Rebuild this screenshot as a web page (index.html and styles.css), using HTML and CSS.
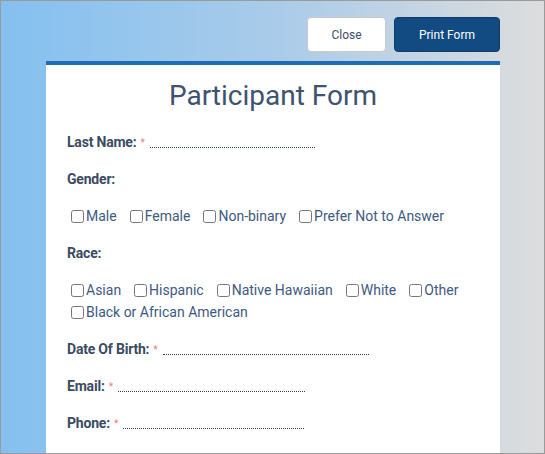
FILE: index.html
```html
<!DOCTYPE html>
<html>
<head>
<meta charset="utf-8">
<link rel="stylesheet" href="styles.css">
</head>
<body>
<div class="page">
  <div class="toolbar">
    <button class="btn btn-close">Close</button>
    <button class="btn btn-print">Print Form</button>
  </div>
  <div class="card">
    <h1 class="title">Participant Form</h1>
    <div class="field"><span class="label">Last Name:</span><span class="req">*</span><span class="line line-last"></span></div>
    <div class="field"><span class="label">Gender:</span></div>
    <div class="options">
      <label class="opt"><input type="checkbox">Male</label>
      <label class="opt"><input type="checkbox">Female</label>
      <label class="opt"><input type="checkbox">Non-binary</label>
      <label class="opt"><input type="checkbox">Prefer Not to Answer</label>
    </div>
    <div class="field"><span class="label">Race:</span></div>
    <div class="options">
      <label class="opt"><input type="checkbox">Asian</label>
      <label class="opt"><input type="checkbox">Hispanic</label>
      <label class="opt"><input type="checkbox">Native Hawaiian</label>
      <label class="opt"><input type="checkbox">White</label>
      <label class="opt"><input type="checkbox">Other</label>
      <label class="opt"><input type="checkbox">Black or African American</label>
    </div>
    <div class="field"><span class="label">Date Of Birth:</span><span class="req">*</span><span class="line line-dob"></span></div>
    <div class="field"><span class="label">Email:</span><span class="req">*</span><span class="line line-email"></span></div>
    <div class="field"><span class="label">Phone:</span><span class="req">*</span><span class="line line-phone"></span></div>
  </div>
</div>
</body>
</html>
```

FILE: styles.css
```css
html, body {
  margin: 0;
  padding: 0;
}
body {
  font-family: Roboto, "Liberation Sans", sans-serif;
}
.page {
  width: 545px;
  height: 454px;
  box-sizing: border-box;
  border: 1px solid #9a9a9a;
  overflow: hidden;
  background: linear-gradient(to right, #84c0f0 0%, #a9cbe9 50%, #dddddd 100%);
}
.toolbar {
  display: flex;
  justify-content: flex-end;
  gap: 8px;
  padding: 16px 44px 0 0;
}
.btn {
  height: 35px;
  box-sizing: border-box;
  border-radius: 4px;
  font-family: Roboto, "Liberation Sans", sans-serif;
  font-size: 12px;
  padding: 0;
}
.btn-close {
  width: 79px;
  background: #ffffff;
  border: 1px solid #c9c9c9;
  color: #3b4f6c;
}
.btn-print {
  width: 106px;
  background: #114b82;
  border: 1px solid #0d3c6a;
  color: #ffffff;
}
.card {
  margin: 9px 0 0 45px;
  width: 454px;
  height: 400px;
  background: #ffffff;
  border-top: 4px solid #1e6db4;
  box-sizing: border-box;
  padding: 14px 21px 0 21px;
}
.title {
  margin: 0 0 19px 0;
  text-align: center;
  font-weight: 400;
  font-size: 28px;
  line-height: 33px;
  color: #3d536f;
}
.field {
  height: 22px;
  line-height: 22px;
  margin-bottom: 15px;
  display: flex;
  align-items: baseline;
}
.label {
  font-weight: 700;
  font-size: 14px;
  color: #3b4b62;
  letter-spacing: -0.2px;
}
.req {
  color: #f07878;
  font-size: 10px;
  margin-left: 4px;
  position: relative;
  top: -1px;
}
.line {
  display: inline-block;
  border-bottom: 1px dotted #2d3e5c;
  height: 0;
  margin-left: 5px;
  position: relative;
  top: 1px;
}
.line-last { width: 165px; }
.line-dob { width: 206px; }
.line-email { width: 187px; }
.line-phone { width: 181px; }
.options {
  display: flex;
  flex-wrap: wrap;
  margin-bottom: 15px;
}
.opt {
  display: flex;
  align-items: center;
  line-height: 22px;
  font-size: 14px;
  color: #3d5a82;
  margin-right: 9px;
}
.opt input {
  margin: 0 2px 0 4px;
  width: 13px;
  height: 13px;
}
```
